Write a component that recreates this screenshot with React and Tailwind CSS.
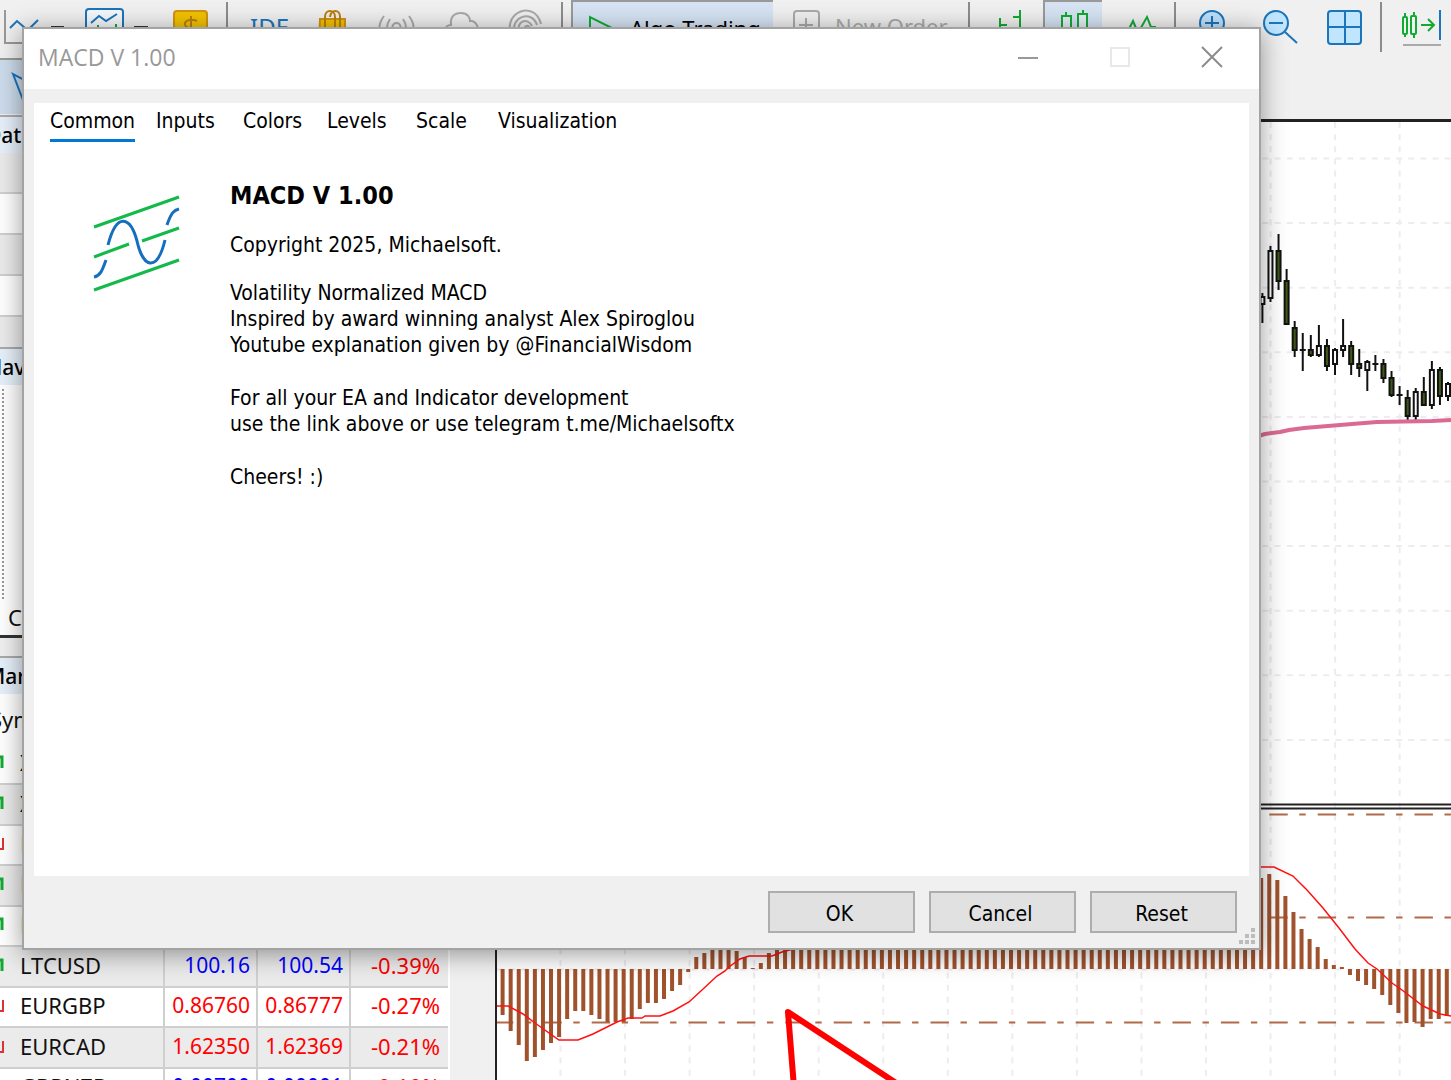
const chartBars = [
  1015, 1031, 1045, 1061, 1057, 1050, 1043, 1037, 1019, 1011, 1011, 1015, 1019, 1022, 1022, 1022, 1019, 1009, 1003, 1003,
  999, 991, 985, 972, 957, 953, 946, 946, 946, 951, 957, 968, 963, 953,
  ...Array.from({ length: 60 }, () => 940),
  878, 874, 880, 896, 912, 929, 939, 947, 959, 965, 967, 975, 981, 985, 989, 995, 1005, 1013, 1023, 1022, 1027, 1019, 1019, 1016,
];

// [high, body top, body bottom, low, kind]
const candles = [
  [293, 297, 304, 323, "up"], [246, 251, 298, 302, "up"], [234, 251, 281, 290, "down"], [269, 281, 324, 324, "down"],
  [321, 328, 350, 357, "down"], [333, 350, 350, 371, "flat"], [335, 350, 355, 357, "down"], [325, 346, 355, 357, "up"],
  [339, 346, 366, 371, "down"], [348, 350, 364, 375, "up"], [319, 346, 350, 357, "up"], [341, 346, 364, 375, "down"],
  [349, 364, 368, 377, "down"], [360, 362, 370, 391, "up"], [355, 364, 364, 371, "flat"], [359, 364, 378, 383, "down"],
  [371, 378, 395, 397, "down"], [386, 395, 396, 405, "flat"], [390, 398, 416, 420, "down"], [388, 392, 416, 420, "up"],
  [377, 392, 405, 405, "down"], [361, 370, 405, 409, "up"], [367, 370, 396, 405, "down"], [382, 384, 396, 401, "up"],
];

const quotes = [
  ["up", "XAUUSD", "3340.12", "3340.45", "0.12%", "#0000ff"],
  ["up", "XAGUSD", "36.120", "36.155", "0.31%", "#0000ff"],
  ["down", "EURUSD", "1.17210", "1.17222", "-0.14%", "#ff0000"],
  ["up", "BTCUSD", "108210", "108250", "0.42%", "#0000ff"],
  ["up", "ETHUSD", "2560.1", "2561.4", "0.55%", "#0000ff"],
  ["up", "LTCUSD", "100.16", "100.54", "-0.39%", "#0000ff"],
  ["down", "EURGBP", "0.86760", "0.86777", "-0.27%", "#ff0000"],
  ["down", "EURCAD", "1.62350", "1.62369", "-0.21%", "#ff0000"],
  ["down", "GBPNZD", "0.00700", "0.00001", "-0.10%", "#0000ff"],
];

const tabs = [
  ["Common", "w-[106px]"],
  ["Inputs", "w-[87px]"],
  ["Colors", "w-[84px]"],
  ["Levels", "w-[89px]"],
  ["Scale", "w-[82px]"],
  ["Visualization", "w-[124px]"],
];

function ToolButton({ label, className = "", children, active }) {
  return (
    <button
      type="button"
      aria-label={label}
      className={`flex h-14 shrink-0 items-start ${active ? "border-l-2 border-t-2 border-[#999999] bg-[#d5e3f3]" : ""} ${className}`}
    >
      {children}
    </button>
  );
}

function Icon({ w, x = 0, y = 0, children }) {
  return (
    <svg className="shrink-0" width={w} height="48" viewBox={`${x} ${y} ${w} 48`} fill="none" strokeWidth="2" aria-hidden="true">
      {children}
    </svg>
  );
}

function Separator() {
  return <div className="mt-0.5 h-[50px] w-0.5 shrink-0 bg-[#8c8c8c]" />;
}

function Toolbar() {
  return (
    <header className="shrink-0">
      <div className="flex h-[58px] overflow-hidden">
        <ToolButton label="Chart type">
          <Icon w={66}>
            <path d="M5 10V43H40" stroke="#999999" />
            <path d="M10 28L17 21L25 28L30 28L38 20" stroke="#1b75bb" />
            <path d="M51 27H64" stroke="#333333" />
          </Icon>
        </ToolButton>
        <ToolButton label="Indicators">
          <Icon w={84} x={66}>
            <rect x="86" y="9" width="37" height="34" rx="3" fill="#f6f9fc" stroke="#1b75bb" strokeWidth="2" />
            <path d="M91 23L99 16L106 21L117 14" stroke="#1b75bb" />
            <path d="M98 25V36M107 28V36M116 24V36" stroke="#11aa33" />
            <path d="M134 27H148" stroke="#333333" />
          </Icon>
        </ToolButton>
        <ToolButton label="Payments">
          <Icon w={76} x={150}>
            <rect x="174" y="11" width="33" height="33" rx="3" fill="#f2c200" stroke="#d29410" />
            <path d="M197 21C190 18 184 21 185 25C187 30 197 27 197 33C196 37 188 37 184 34M191 16V39" stroke="#b97f0b" />
          </Icon>
        </ToolButton>
        <Separator />
        <ToolButton label="IDE" className="w-[90px] pl-[22px] pt-[11px] font-['Noto_Sans'] text-2xl leading-8 text-[#1b75bb]">IDE</ToolButton>
        <ToolButton label="Market">
          <Icon w={50} x={318}>
            <path d="M320 19H345V42H319Z" fill="#f2c200" stroke="#d29410" />
            <path d="M325 27V17C325 9 335 9 335 17V27M330 17C331 9 340 9 340 17V27" stroke="#b97f0b" />
          </Icon>
        </ToolButton>
        <ToolButton label="Signals">
          <Icon w={66} x={368}>
            <path d="M384 16C378 24 378 32 384 39M390 19C386 25 386 31 390 36M409 16C415 24 415 32 409 39M403 19C407 25 407 31 403 36" stroke="#aaaaaa" />
            <circle cx="396.500" cy="27" r="4" stroke="#aaaaaa" />
          </Icon>
        </ToolButton>
        <ToolButton label="Cloud">
          <Icon w={66} x={434}>
            <path d="M450 38C442 37 443 25 451 25C450 17 454 13 461 13C468 13 470 18 470 21C476 20 480 28 478 38Z" stroke="#aaaaaa" />
          </Icon>
        </ToolButton>
        <ToolButton label="Network">
          <Icon w={61} x={500}>
            <path d="M511 35C503 11 535 0 541 24M515 34C509 17 532 9 537 25M520 32C515 21 528 17 532 26M525 30C523 25 530 24 530 30H541" stroke="#aaaaaa" />
          </Icon>
        </ToolButton>
        <Separator />
        <ToolButton label="Algo Trading" active className="ml-2 w-[202px] font-['Noto_Sans'] text-[22px] leading-8">
          <Icon w={57} x={573} y={2}><path d="M590 17V38L610 27Z" stroke="#11aa33" /></Icon>
          <span className="mt-2.5 whitespace-nowrap">Algo Trading</span>
        </ToolButton>
        <ToolButton label="New Order" className="w-[195px] font-['Noto_Sans'] text-[22px] leading-8 text-[#aaaaaa]">
          <Icon w={62} x={773}>
            <rect x="794" y="11" width="25" height="28" rx="3" stroke="#aaaaaa" />
            <path d="M806 18V32M799 25H813" stroke="#aaaaaa" />
          </Icon>
          <span className="mt-2.5 whitespace-nowrap">New Order</span>
        </ToolButton>
        <Separator />
        <ToolButton label="Bar chart">
          <Icon w={73} x={970}>
            <path d="M1000 18V42M1000 25H1007M1020 10V36M1020 17H1013" stroke="#11aa33" />
          </Icon>
        </ToolButton>
        <ToolButton label="Candlesticks" active className="w-[59px]">
          <Icon w={57} x={1045} y={2}>
            <path d="M1066 12V40M1083 10V40" stroke="#11aa33" />
            <rect x="1062" y="16" width="9" height="19" fill="#e5eef5" stroke="#11aa33" />
            <rect x="1078" y="14" width="9" height="21" fill="#e5eef5" stroke="#11aa33" />
          </Icon>
        </ToolButton>
        <ToolButton label="Line chart">
          <Icon w={72} x={1102}><path d="M1129 27H1130L1133 21L1138 33L1147 17L1151 27H1156" stroke="#11aa33" /></Icon>
        </ToolButton>
        <Separator />
        <ToolButton label="Zoom in">
          <Icon w={76} x={1176}>
            <circle cx="1212" cy="23" r="12" fill="#bfe1fb" stroke="#1b75bb" />
            <path d="M1205 23H1219M1212 16V30M1221 32L1232 43" stroke="#1b75bb" />
          </Icon>
        </ToolButton>
        <ToolButton label="Zoom out">
          <Icon w={64} x={1252}>
            <circle cx="1276" cy="23" r="12" fill="#bfe5ff" stroke="#1b75bb" />
            <path d="M1269 23H1283M1285 32L1297 43" stroke="#1b75bb" />
          </Icon>
        </ToolButton>
        <ToolButton label="Tile windows">
          <Icon w={64} x={1316}>
            <rect x="1328" y="11" width="33" height="33" rx="3" fill="#bfe5ff" stroke="#1b75bb" />
            <path d="M1345 11V44M1328 27H1361" stroke="#1b75bb" />
          </Icon>
        </ToolButton>
        <Separator />
        <ToolButton label="Shift chart">
          <Icon w={69} x={1382}>
            <path d="M1405 13V37M1414 12V38" stroke="#11aa33" />
            <rect x="1403" y="17" width="4" height="17" rx="1" fill="#eef5ee" stroke="#11aa33" />
            <rect x="1411" y="16" width="5" height="18" rx="1" fill="#eef5ee" stroke="#11aa33" />
            <path d="M1421 25H1433M1428 19L1434 25L1428 31" stroke="#11aa33" />
            <path d="M1440 10V40" stroke="#1b75bb" />
            <path d="M1403 45H1441" stroke="#aaaaaa" />
          </Icon>
        </ToolButton>
      </div>
      <div className="flex h-[54px]">
        <ToolButton label="Cursor" className="w-12 border-t-2 border-[#999999] bg-[#cddcec]">
          <Icon w={48} y={60}>
            <path d="M13 74L23 100L29 90L40 88Z" stroke="#1b75bb" />
          </Icon>
        </ToolButton>
      </div>
    </header>
  );
}

function PanelTitle({ children }) {
  return (
    <h2 className="h-[38px] shrink-0 border-t-2 border-[#aaaaaa] bg-[#e6f0fa] pl-0.5 text-[21px] font-medium leading-9 text-black">
      {children}
    </h2>
  );
}

function Trend({ dir }) {
  return dir === "up" ? (
    <svg width="20" height="20" viewBox="0 0 20 20" fill="none" stroke="#11aa33" strokeWidth="3" aria-hidden="true">
      <path d="M4 17L13 9M8 5H18V16" />
    </svg>
  ) : (
    <svg width="20" height="20" viewBox="0 0 20 20" fill="none" stroke="#dd3333" strokeWidth="2" aria-hidden="true">
      <path d="M4 4L13 12M8 16H19V5" />
    </svg>
  );
}

function Sidebar() {
  return (
    <aside className="-ml-4 flex w-[466px] shrink-0 flex-col overflow-hidden border-r-2 border-white font-['Noto_Sans'] text-[22px] text-[#111111]">
      <section className="mt-[3px] flex h-[232px] shrink-0 flex-col overflow-hidden">
        <PanelTitle>Data Window</PanelTitle>
        <ul className="flex grow flex-col">
          {["Date", "Time", "Open", "High", "Low"].map((n) => (
            <li key={n} className="h-[41px] shrink-0 border-b-2 border-[#cfcfcf] bg-white pl-10 odd:bg-[#ebebeb]">{n}</li>
          ))}
        </ul>
      </section>
      <section className="flex h-[291px] shrink-0 flex-col border-b-[3px] border-[#333333] bg-white">
        <PanelTitle>Navigator</PanelTitle>
        <div className="ml-[18px] mt-1 grow border-l-2 border-dotted border-[#999999]" />
        <p className="pl-6 leading-9">Common</p>
      </section>
      <section className="mt-[18px] flex grow flex-col bg-white">
        <PanelTitle>Market Watch</PanelTitle>
        <table className="w-full border-collapse">
          <thead>
            <tr className="h-[50px]">
              <th className="w-[180px] pl-1.5 text-left font-normal">Symbol</th>
              <th className="w-[93px] font-normal">Bid</th>
              <th className="w-[93px] font-normal">Ask</th>
              <th className="font-normal">Daily</th>
            </tr>
          </thead>
          <tbody>
            {quotes.map(([dir, name, bid, ask, change, color]) => (
              <tr key={name} className="h-10 border-b-2 border-[#cfcfcf] bg-white leading-8 even:h-[41px] even:bg-[#ebebeb]">
                <td className="p-0 pb-1">
                  <span className="flex items-center gap-4"><Trend dir={dir} />{name}</span>
                </td>
                <td className="border-x-2 border-[#cfcfcf] p-0 pb-1 pr-1.5 text-right text-[21px]" style={{ color }}>{bid}</td>
                <td className="border-x-2 border-[#cfcfcf] p-0 pb-1 pr-1.5 text-right text-[21px]" style={{ color }}>{ask}</td>
                <td className="p-0 pb-1 pr-2 text-right text-[#ff0000]">{change}</td>
              </tr>
            ))}
          </tbody>
        </table>
      </section>
    </aside>
  );
}

function Chart() {
  const step = 8.07;
  const columns = Array.from({ length: 14 }, (_, i) => 560.5 + i * 64.55);
  const rows = Array.from({ length: 10 }, (_, i) => 158.5 + i * 64.6);
  return (
    <main className="ml-[45px] mt-[7px] min-w-0 grow border-l-2 border-t-[3px] border-[#222222] bg-white">
      <svg className="block h-full w-full" viewBox="497 122 954 958" preserveAspectRatio="xMinYMin slice" fill="none" role="img" aria-label="Price chart with MACD">
        <g stroke="#f0eaf1" strokeWidth="2" strokeDasharray="6 6.15">
          {columns.map((x) => <path key={x} d={`M${x} 122V1080`} />)}
          {rows.map((y) => <path key={y} d={`M497 ${y}H1451`} />)}
          <path d="M497 969.500H1451" />
        </g>
        {candles.map(([high, top, bottom, low, kind], i) => {
          const x = 1262.4 + i * step;
          return (
            <g key={i} stroke="#111111" strokeWidth="2">
              <path d={`M${x} ${high}V${low}`} />
              {kind === "flat" ? (
                <path d={`M${x - 3} ${top}H${x + 3}`} />
              ) : (
                <rect x={x - 2} y={top} width="4" height={bottom - top} fill={kind === "up" ? "#ffffff" : "#3f5a17"} />
              )}
            </g>
          );
        })}
        <path d="M1255 437L1265 434L1280 432L1289 430L1304 428L1328 426L1352 424L1377 422L1432 421L1451 420" stroke="#db6a93" strokeWidth="4" />
        <path d="M497 804.500H1451M497 808.500H1451" stroke="#222222" strokeWidth="2" />
        <g stroke="#b06a48" strokeWidth="2" strokeDasharray="18.4 11.6 6.4 12">
          <path d="M494.900 814.500H1451M494.900 917.500H1451M494.900 1022.500H1451" />
        </g>
        <g stroke="#a0522d" strokeWidth="4">
          {chartBars.map((y, i) => <path key={i} d={`M${502.6 + i * step} 969V${y}`} />)}
        </g>
        <g stroke="#ff1111" strokeWidth="1.500">
          <path d="M496 1006H508L523 1014L535 1023L559 1040H578L593 1034L617 1022L628 1018H642L645 1016H660L673 1011L689 1002L702 990L717 976L725 971L729 967L740 959L749 956H772L782 952L793 949" />
          <path d="M1255 867H1274L1293 876L1307 890L1323 908L1339 928L1355 949L1368 963L1377 969L1392 983L1402 990L1423 1006L1440 1014L1451 1016" />
        </g>
        <path d="M795 1100L788 1012L922 1100" stroke="#ff0000" strokeWidth="6" strokeLinejoin="round" />
      </svg>
    </main>
  );
}

function IndicatorLogo() {
  return (
    <svg className="h-[100px] w-[92px] shrink-0" viewBox="90 194 92 100" fill="none" strokeWidth="3" aria-hidden="true">
      <path d="M94 227L179 197M94 257L129 244M142 241L179 228M94 290L179 260" stroke="#13b94a" />
      <path d="M94 277C101 276 103 268 106 260M108 245C117 210 131 218 137 241C143 268 157 273 165 240M167 225C171 213 174 210 179 209" stroke="#146fbf" />
    </svg>
  );
}

function DialogButton({ children }) {
  return (
    <button type="button" className="h-[42px] w-[147px] border-2 border-[#adadad] bg-[#e1e1e1] pr-1 pt-1 text-[21px] leading-8 text-black">
      {children}
    </button>
  );
}

function PropertiesDialog() {
  return (
    <div
      role="dialog"
      aria-labelledby="dialog-title"
      className="absolute bottom-[130px] left-[22px] right-[190px] top-[27px] flex flex-col border-2 border-[#a3a3a3] bg-[#f0f0f0] font-['DejaVu_Sans_Condensed','Noto_Sans',sans-serif] text-black shadow-[0_4px_24px_rgba(0,0,0,0.4)]"
    >
      <div className="flex h-[60px] shrink-0 items-center justify-between bg-white pb-1 pl-3.5 pr-9">
        <h1 id="dialog-title" className="font-['Open_Sans'] text-[23px] text-[#999999]">MACD V 1.00</h1>
        <div className="flex items-center gap-[70px]">
          <button type="button" aria-label="Minimize">
            <svg width="22" height="22" viewBox="0 0 22 22" fill="none" stroke="#999999" strokeWidth="2"><path d="M1 12H21" /></svg>
          </button>
          <button type="button" aria-label="Maximize" disabled>
            <svg width="22" height="22" viewBox="0 0 22 22" fill="none" stroke="#e8e8e8" strokeWidth="2"><path d="M2 2H20V20H2Z" /></svg>
          </button>
          <button type="button" aria-label="Close">
            <svg width="22" height="22" viewBox="0 0 22 22" fill="none" stroke="#8c8c8c" strokeWidth="2"><path d="M1 1L21 21M21 1L1 21" /></svg>
          </button>
        </div>
      </div>
      <div className="mx-2.5 mt-3.5 flex grow flex-col bg-white">
        <div role="tablist" className="flex pl-4 text-[21px]">
          {tabs.map(([tab, width], i) => (
            <button key={tab} type="button" role="tab" aria-selected={i === 0} className={`flex ${width}`}>
              <span className={`border-b-[3px] leading-9 ${i === 0 ? "border-[#0078d7]" : "border-transparent"}`}>{tab}</span>
            </button>
          ))}
        </div>
        <div role="tabpanel" className="flex gap-12 pl-14 pt-9">
          <div className="pt-4"><IndicatorLogo /></div>
          <div className="text-[21px] leading-[26px]">
            <h2 className="text-[25px] font-bold leading-9">MACD V 1.00</h2>
            <p className="mt-[18px]">Copyright 2025, Michaelsoft.</p>
            <p className="mt-[22px]">
              Volatility Normalized MACD<br />
              Inspired by award winning analyst Alex Spiroglou<br />
              Youtube explanation given by @FinancialWisdom
            </p>
            <p className="mt-[27px]">
              For all your EA and Indicator development<br />
              use the link above or use telegram t.me/Michaelsoftx
            </p>
            <p className="mt-[27px]">Cheers! :)</p>
          </div>
        </div>
      </div>
      <div className="relative flex shrink-0 justify-end gap-3.5 pb-[15px] pr-[22px] pt-[15px]">
        <DialogButton>OK</DialogButton>
        <DialogButton>Cancel</DialogButton>
        <DialogButton>Reset</DialogButton>
        <svg className="absolute bottom-1 right-1 h-4 w-4" viewBox="0 0 16 16" fill="#bcbcbc" aria-hidden="true">
          <path d="M12 0h4v4h-4zM12 6h4v4h-4zM12 12h4v4h-4zM6 6h4v4H6zM6 12h4v4H6zM0 12h4v4H0z" />
        </svg>
      </div>
    </div>
  );
}

export default function App() {
  return (
    <div className="relative flex h-screen flex-col overflow-hidden bg-[#f0f0f0]">
      <Toolbar />
      <div className="flex min-h-0 grow">
        <Sidebar />
        <Chart />
      </div>
      <PropertiesDialog />
    </div>
  );
}
